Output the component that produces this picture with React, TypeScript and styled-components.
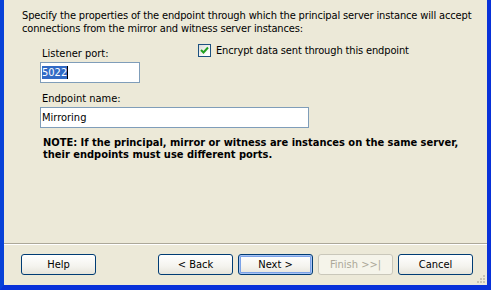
import React from "react";
import styled, { createGlobalStyle, css } from "styled-components";

const GlobalStyle = createGlobalStyle`
  html, body {
    margin: 0;
    padding: 0;
    background: #ece9d8;
  }
  body {
    font-family: Tahoma, "DejaVu Sans Condensed", "DejaVu Sans", sans-serif;
    font-size: 11px;
    color: #000;
  }
`;

// ====== Window frame ======
const Frame = styled.div`
  width: 491px;
  height: 290px;
  box-sizing: border-box;
  background: #ece9d8;
  border-left: 4px solid #0842d8;
  border-right: 4px solid #0831d9;
  border-bottom: 5px solid #0831d9;
  display: flex;
  flex-direction: column;
  position: relative;
`;

const Body = styled.div`
  flex: 1;
  padding: 9px 8px 0 18px;
`;

const Description = styled.p`
  margin: 0;
  line-height: 13px;
  white-space: nowrap;
  letter-spacing: -0.14px;
`;

const Form = styled.div`
  margin-top: 8px;
  padding-left: 18px;
  display: flex;
  flex-direction: column;
`;

const TopRow = styled.div`
  display: flex;
  align-items: flex-start;
`;

const Field = styled.div<{ width?: number }>`
  display: flex;
  flex-direction: column;
  width: ${({ width }) => (width ? `${width}px` : "auto")};
`;

const Label = styled.label<{ $top?: number }>`
  line-height: 13px;
  padding-left: 2px;
  margin-top: ${({ $top }) => $top ?? 0}px;
  margin-bottom: 2px;
`;

const Input = styled.div<{ width: number }>`
  box-sizing: border-box;
  width: ${({ width }) => width}px;
  height: 21px;
  background: #fff;
  border: 1px solid #7f9db9;
  padding: 3px 1px;
  line-height: 13px;
  white-space: nowrap;
`;

const Selected = styled.span`
  background: #316ac5;
  color: #fff;
  border-right: 1px solid #000;
`;

const CheckRow = styled.div`
  display: flex;
  align-items: center;
  gap: 5px;
  margin-top: 1px;
  line-height: 13px;
  letter-spacing: -0.14px;
`;

const CheckBox = styled.span`
  box-sizing: border-box;
  width: 13px;
  height: 13px;
  border: 1px solid #1c5180;
  background: linear-gradient(135deg, #dcdcd7 0%, #fff 80%);
  display: flex;
  align-items: center;
  justify-content: center;
`;

const SecondField = styled(Field)`
  margin-top: 9px;
`;

const Note = styled.p`
  margin: 9px 0 0 3px;
  font-weight: bold;
  line-height: 12px;
  white-space: nowrap;
`;

// ====== Button bar ======
const Separator = styled.div`
  height: 0;
  border-top: 1px solid #aca899;
  border-bottom: 1px solid #fff;
`;

const ButtonBar = styled.div`
  display: flex;
  align-items: center;
  padding: 9px 0 10px 17px;
  gap: 5px;
`;

const Spacer = styled.div`
  width: 52px;
`;

const Button = styled.button<{ $default?: boolean; disabled?: boolean }>`
  box-sizing: border-box;
  width: 75px;
  height: 21px;
  padding: 0;
  font: inherit;
  color: #000;
  border: 1px solid #003c74;
  border-radius: 3px;
  background: linear-gradient(#ffffff 0%, #f4f3ee 60%, #e6e4da 100%);
  ${({ $default }) =>
    $default &&
    css`
      box-shadow: inset 0 0 0 1px #a9c4f4, inset 0 0 0 2px #7ba2e7;
    `}
  ${({ disabled }) =>
    disabled &&
    css`
      border-color: #c9c7ba;
      color: #aca899;
      background: #f5f4ea;
    `}
`;

const Grip = styled.svg`
  position: absolute;
  right: 1px;
  bottom: 1px;
`;

const App: React.FC = () => {
  return (
    <>
      <GlobalStyle />
      <Frame>
        <Body>
          <Description>
            Specify the properties of the endpoint through which the principal server instance will accept
            <br />
            connections from the mirror and witness server instances:
          </Description>
          <Form>
            <TopRow>
              <Field width={158}>
                <Label $top={4}>Listener port:</Label>
                <Input width={100}>
                  <Selected>5022</Selected>
                </Input>
              </Field>
              <CheckRow>
                <CheckBox>
                  <svg width="9" height="9" viewBox="0 0 9 9">
                    <path d="M1 4 L3.5 6.5 L8 1.5" stroke="#21a121" strokeWidth="2" fill="none" />
                  </svg>
                </CheckBox>
                <span>Encrypt data sent through this endpoint</span>
              </CheckRow>
            </TopRow>
            <SecondField>
              <Label>Endpoint name:</Label>
              <Input width={269}>Mirroring</Input>
            </SecondField>
            <Note>
              NOTE: If the principal, mirror or witness are instances on the same server,
              <br />
              their endpoints must use different ports.
            </Note>
          </Form>
        </Body>
        <Separator />
        <ButtonBar>
          <Button>Help</Button>
          <Spacer />
          <Button>&lt; Back</Button>
          <Button $default>Next &gt;</Button>
          <Button disabled>Finish &gt;&gt;|</Button>
          <Button>Cancel</Button>
        </ButtonBar>
        <Grip width="10" height="10" viewBox="0 0 10 10">
          <rect x="7" y="1" width="2" height="2" fill="#c6c3b4" />
          <rect x="4" y="4" width="2" height="2" fill="#c6c3b4" />
          <rect x="7" y="4" width="2" height="2" fill="#c6c3b4" />
          <rect x="1" y="7" width="2" height="2" fill="#c6c3b4" />
          <rect x="4" y="7" width="2" height="2" fill="#c6c3b4" />
          <rect x="7" y="7" width="2" height="2" fill="#c6c3b4" />
        </Grip>
      </Frame>
    </>
  );
};

export default App;
